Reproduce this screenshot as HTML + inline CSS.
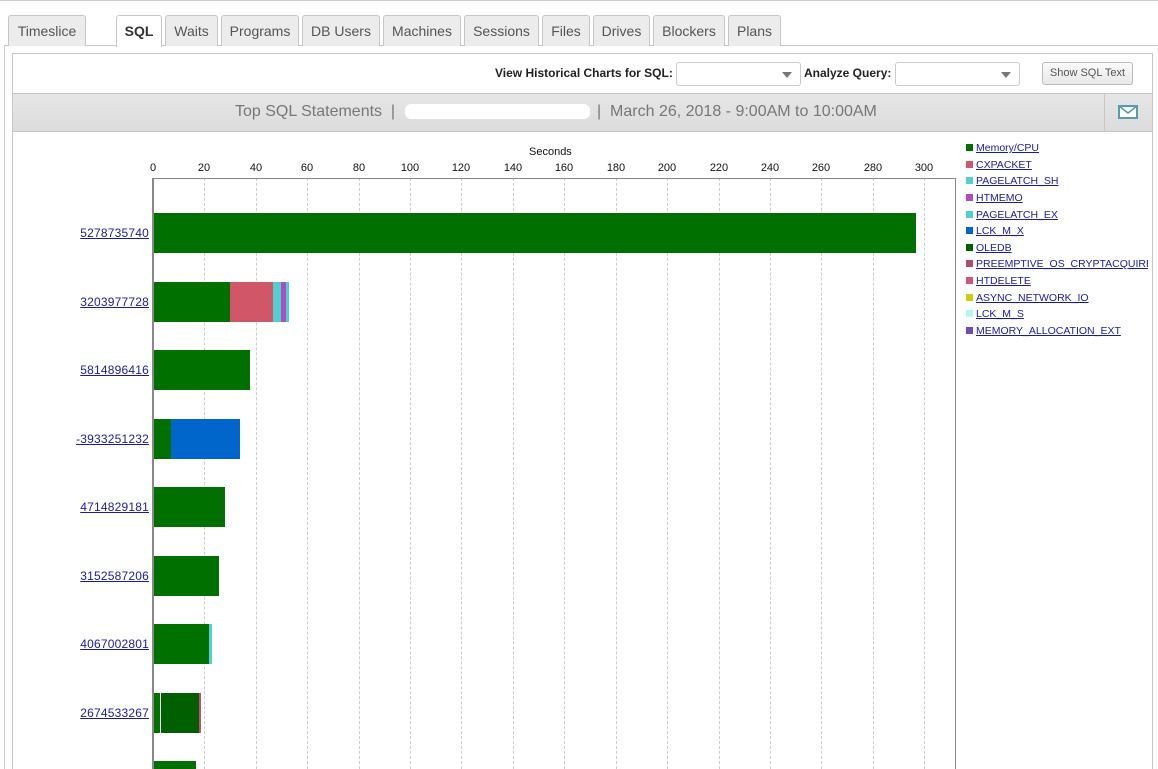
<!DOCTYPE html>
<html style="overflow:hidden;width:1158px;height:769px"><head><meta charset="utf-8"><style>
*{margin:0;padding:0;box-sizing:border-box}
body{width:1158px;height:769px;overflow:hidden;background:#fff;font-family:"Liberation Sans",Arial,sans-serif;position:relative}
.a{position:absolute}
.tab{position:absolute;top:15px;height:31px;border:1px solid #c6c6c6;border-bottom:none;background:#ececec;border-radius:3px 3px 0 0;font-size:14px;color:#555;text-align:center;line-height:31px}
.tab.on{background:#fff;font-weight:bold;color:#333;height:32px}
.lbl{position:absolute;right:1009px;font-size:12px;text-decoration:underline;color:#1a1aa8;letter-spacing:0.2px}
.tk{position:absolute;top:162px;font-size:11px;color:#111;width:30px;text-align:center}
.g{position:absolute;top:178px;height:591px;border-left:1px dashed #ccc;width:0}
.b{position:absolute;height:40px}
.lg{position:absolute;left:966px;font-size:10.5px;color:#1a1aa8;text-decoration:underline;white-space:nowrap}
.lg i{display:inline-block;width:7px;height:7px;margin-right:3px;vertical-align:0px}
.sel{position:absolute;top:62px;height:24px;border:1px solid #ccc;border-radius:3px;background:#fff}
.sel:after{content:"";position:absolute;right:8px;top:9px;border:5px solid transparent;border-top:6px solid #777}
</style></head><body>
<div class="a" style="left:0;top:0;width:1158px;height:1px;background:#ccc"></div>
<div class="a" style="left:4px;top:45px;width:1154px;height:724px;border-left:1px solid #ccc;border-top:1px solid #c6c6c6"></div>
<div class="tab" style="left:8px;width:78px">Timeslice</div>
<div class="tab on" style="left:116px;width:46px">SQL</div>
<div class="tab" style="left:165px;width:53px">Waits</div>
<div class="tab" style="left:221px;width:78px">Programs</div>
<div class="tab" style="left:302px;width:78px">DB Users</div>
<div class="tab" style="left:383px;width:78px">Machines</div>
<div class="tab" style="left:464px;width:75px">Sessions</div>
<div class="tab" style="left:542px;width:48px">Files</div>
<div class="tab" style="left:593px;width:57px">Drives</div>
<div class="tab" style="left:653px;width:72px">Blockers</div>
<div class="tab" style="left:728px;width:53px">Plans</div>
<div class="a" style="left:12px;top:53px;width:1141px;height:716px;border:1px solid #c6c6c6;border-bottom:none"></div>
<div class="a" style="left:495px;top:66px;font-size:12px;font-weight:bold;color:#222">View Historical Charts for SQL:</div>
<div class="sel" style="left:676px;width:125px"></div>
<div class="a" style="left:804px;top:66px;font-size:12px;font-weight:bold;color:#222">Analyze Query:</div>
<div class="sel" style="left:895px;width:125px"></div>
<div class="a" style="left:1042px;top:62px;width:91px;height:23px;border:1px solid #bbb;border-radius:3px;background:linear-gradient(#fafafa,#e8e8e8);font-size:11px;color:#555;text-align:center;line-height:21px">Show SQL Text</div>
<div class="a" style="left:13px;top:93px;width:1139px;height:39px;background:linear-gradient(#e6e6e6,#dcdcdc);border-top:1px solid #c6c6c6;border-bottom:1px solid #c6c6c6"></div>
<div class="a" style="left:1104px;top:94px;width:1px;height:37px;background:#c6c6c6"></div>
<div class="a" style="left:235px;top:103px;font-size:16px;color:#777;white-space:nowrap">Top SQL Statements &nbsp;|</div>
<div class="a" style="left:405px;top:104px;width:185px;height:15px;background:#fff;border-radius:6px"></div>
<div class="a" style="left:597px;top:103px;font-size:16px;color:#777;white-space:nowrap">| &nbsp;March 26, 2018 - 9:00AM to 10:00AM</div>
<svg class="a" style="left:1118px;top:105px" width="20" height="14"><rect x="1" y="1" width="18" height="12" fill="#fff" stroke="#5a9ab0" stroke-width="2"/><path d="M1 1 L10 8 L19 1" fill="none" stroke="#5a9ab0" stroke-width="1.5"/></svg>
<div class="a" style="left:529px;top:146px;font-size:11px;color:#111">Seconds</div>
<div class="tk" style="left:138px">0</div><div class="tk" style="left:189px">20</div><div class="tk" style="left:241px">40</div><div class="tk" style="left:292px">60</div><div class="tk" style="left:344px">80</div><div class="tk" style="left:395px">100</div><div class="tk" style="left:446px">120</div><div class="tk" style="left:498px">140</div><div class="tk" style="left:549px">160</div><div class="tk" style="left:601px">180</div><div class="tk" style="left:652px">200</div><div class="tk" style="left:704px">220</div><div class="tk" style="left:755px">240</div><div class="tk" style="left:806px">260</div><div class="tk" style="left:858px">280</div><div class="tk" style="left:909px">300</div>
<div class="g" style="left:204px"></div><div class="g" style="left:256px"></div><div class="g" style="left:307px"></div><div class="g" style="left:359px"></div><div class="g" style="left:410px"></div><div class="g" style="left:461px"></div><div class="g" style="left:513px"></div><div class="g" style="left:564px"></div><div class="g" style="left:616px"></div><div class="g" style="left:667px"></div><div class="g" style="left:719px"></div><div class="g" style="left:770px"></div><div class="g" style="left:821px"></div><div class="g" style="left:873px"></div><div class="g" style="left:924px"></div>
<div class="a" style="left:152px;top:178px;width:804px;height:1px;background:#888"></div>
<div class="a" style="left:152px;top:178px;width:2px;height:591px;background:#888"></div>
<div class="a" style="left:955px;top:178px;width:1px;height:591px;background:#888"></div>
<div class="b" style="left:154px;top:213px;width:762px;background:#007000"></div>
<div class="b" style="left:154px;top:282px;width:76px;background:#007000"></div>
<div class="b" style="left:230px;top:282px;width:43px;background:#d05668"></div>
<div class="b" style="left:273px;top:282px;width:8px;background:#50d0d0"></div>
<div class="b" style="left:281px;top:282px;width:5px;background:#b04cc0"></div>
<div class="b" style="left:286px;top:282px;width:3px;background:#50d0d0"></div>
<div class="b" style="left:154px;top:350px;width:96px;background:#007000"></div>
<div class="b" style="left:154px;top:419px;width:17px;background:#007000"></div>
<div class="b" style="left:171px;top:419px;width:69px;background:#0066cc"></div>
<div class="b" style="left:154px;top:487px;width:71px;background:#007000"></div>
<div class="b" style="left:154px;top:556px;width:65px;background:#007000"></div>
<div class="b" style="left:154px;top:624px;width:55px;background:#007000"></div>
<div class="b" style="left:209px;top:624px;width:3px;background:#50d0d0"></div>
<div class="b" style="left:154px;top:693px;width:6px;background:#007000"></div>
<div class="b" style="left:161px;top:693px;width:38px;background:#006000"></div>
<div class="b" style="left:199px;top:693px;width:2px;background:#c05070"></div>
<div class="b" style="left:154px;top:761px;width:42px;height:8px;background:#007000"></div>
<div class="lbl" style="top:226px">5278735740</div>
<div class="lbl" style="top:295px">3203977728</div>
<div class="lbl" style="top:363px">5814896416</div>
<div class="lbl" style="top:432px">-3933251232</div>
<div class="lbl" style="top:500px">4714829181</div>
<div class="lbl" style="top:569px">3152587206</div>
<div class="lbl" style="top:637px">4067002801</div>
<div class="lbl" style="top:706px">2674533267</div>
<div class="lg" style="top:142px"><i style="background:#007000"></i>Memory/CPU</div>
<div class="lg" style="top:159px"><i style="background:#d05668"></i>CXPACKET</div>
<div class="lg" style="top:175px"><i style="background:#50d0d0"></i>PAGELATCH_SH</div>
<div class="lg" style="top:192px"><i style="background:#b04cc0"></i>HTMEMO</div>
<div class="lg" style="top:209px"><i style="background:#50d0d0"></i>PAGELATCH_EX</div>
<div class="lg" style="top:225px"><i style="background:#0066cc"></i>LCK_M_X</div>
<div class="lg" style="top:242px"><i style="background:#006000"></i>OLEDB</div>
<div class="lg" style="top:258px;width:182px;overflow:hidden"><i style="background:#b04c70"></i>PREEMPTIVE_OS_CRYPTACQUIRECONTEXT</div>
<div class="lg" style="top:275px"><i style="background:#d05680"></i>HTDELETE</div>
<div class="lg" style="top:292px"><i style="background:#d0d000"></i>ASYNC_NETWORK_IO</div>
<div class="lg" style="top:308px"><i style="background:#b0f8f8"></i>LCK_M_S</div>
<div class="lg" style="top:325px"><i style="background:#7048b8"></i>MEMORY_ALLOCATION_EXT</div>
</body></html>
